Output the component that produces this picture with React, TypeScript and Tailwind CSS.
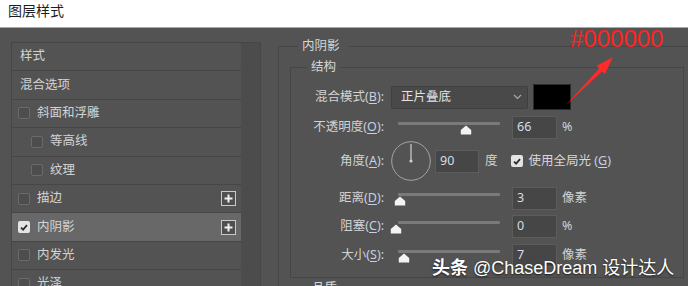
import React from 'react'

const ui = "font-['Noto_Sans','Noto_Sans_CJK_SC',sans-serif]"

function Acc({ k, colon = true }: { k: string; colon?: boolean }) {
  return (
    <span className="text-[#c3d2e2]">
      (<span className="underline decoration-1 underline-offset-2">{k}</span>){colon ? ':' : ''}
    </span>
  )
}

function Box({ checked = false, className = '' }: { checked?: boolean; className?: string }) {
  return checked ? (
    <span className={`flex h-[12px] w-[12px] shrink-0 items-center justify-center rounded-[2px] bg-[#e4e4e4] ${className}`}>
      <svg width="8" height="7" viewBox="0 0 8 7">
        <path d="M1 3.6 L3.1 5.6 L7 1.2" fill="none" stroke="#2e2e2e" strokeWidth="1.8" />
      </svg>
    </span>
  ) : (
    <span className={`h-[12px] w-[12px] shrink-0 rounded-[2px] border border-[#6a6a6a] bg-[#4d4d4d] ${className}`} />
  )
}

function Plus() {
  return (
    <span className="ml-auto mr-[5px] flex h-[15px] w-[15px] items-center justify-center border border-[#c9c9c9] bg-[#4f4f4f]">
      <svg width="9" height="9" viewBox="0 0 9 9">
        <path d="M4.5 0.5 V8.5 M0.5 4.5 H8.5" stroke="#f2f2f2" strokeWidth="2" />
      </svg>
    </span>
  )
}

type Row = { label: string; box?: 'none' | 'off' | 'on'; indent?: boolean; plus?: boolean; active?: boolean }

const rows: Row[] = [
  { label: '样式' },
  { label: '混合选项' },
  { label: '斜面和浮雕', box: 'off' },
  { label: '等高线', box: 'off', indent: true },
  { label: '纹理', box: 'off', indent: true },
  { label: '描边', box: 'off', plus: true },
  { label: '内阴影', box: 'on', plus: true, active: true },
  { label: '内发光', box: 'off' },
  { label: '光泽', box: 'off' },
]

function Thumb({ left }: { left: number }) {
  return (
    <svg className="absolute top-[5px]" style={{ left }} width="12" height="10" viewBox="0 0 12 10">
      <path d="M6 0.5 L11.2 5 L11.2 9.5 L0.8 9.5 L0.8 5 Z" fill="#f3f3f3" />
    </svg>
  )
}

function Slider({ thumb }: { thumb: number }) {
  return (
    <div className="relative ml-[14px] h-[16px] w-[102px]">
      <div className="absolute left-0 right-0 top-[2px] h-[3px] rounded-[1px] bg-[#7a7a7a]" />
      <Thumb left={thumb} />
    </div>
  )
}

function Field({ value, className = '' }: { value: string; className?: string }) {
  return (
    <div
      className={`flex h-[23px] items-center border border-[#5c5c5c] bg-[#464646] pl-[4px] text-[12.5px] text-[#d5dde6] ${className}`}
    >
      {value}
    </div>
  )
}

function Label({ text, k }: { text: string; k: string }) {
  return (
    <div className="w-[93px] shrink-0 text-right text-[12.5px] text-[#d2d2d2]">
      {text}
      <Acc k={k} />
    </div>
  )
}

function SliderRow({ text, k, thumb, value, unit, mt }: { text: string; k: string; thumb: number; value: string; unit: string; mt: string }) {
  return (
    <div className={`flex h-[23px] items-center ${mt}`}>
      <Label text={text} k={k} />
      <Slider thumb={thumb} />
      <Field value={value} className="ml-[12px] w-[45px]" />
      <span className="ml-[5px] text-[12.5px] text-[#d2d2d2]">{unit}</span>
    </div>
  )
}

export default function App() {
  return (
    <div className={`relative h-[286px] w-[688px] overflow-hidden bg-white ${ui}`}>
      <div className="h-[28px] border-b border-[#a9a9a9] pl-[8px] text-[14px] leading-[21px] text-[#1e1e1e]">图层样式</div>

      <div className="flex h-[258px] items-start bg-[#535353]">
        {/* style list */}
        <div className="ml-[11px] mt-[14px] flex w-[250px] border border-[#464646]">
          <div className="w-[229px]">
            {rows.map((r) => (
              <div
                key={r.label}
                className={`box-border flex h-[28.4px] items-center border-b border-[#464646] text-[12.5px] text-[#d4d4d4] ${
                  r.active ? 'bg-[#686868]' : ''
                } ${r.box ? (r.indent ? 'pl-[19px]' : 'pl-[6px]') : 'pl-[8px]'}`}
              >
                {r.box && <Box checked={r.box === 'on'} className="mr-[7px]" />}
                <span>{r.label}</span>
                {r.plus && <Plus />}
              </div>
            ))}
          </div>
          <div className="flex-1 bg-[#4c4c4c]" />
        </div>

        {/* inner shadow settings */}
        <fieldset className="ml-[17px] mt-[10px] flex-1 border-l border-t border-[#464646] pl-[11px]">
          <legend className="ml-[8px] pl-[4px] pr-[9px] text-[12.5px] leading-[16px] text-[#d8d8d8]">内阴影</legend>
          <fieldset className="mt-[5px] w-[394px] border border-[#464646] pb-[10px]">
            <legend className="ml-[16px] px-[4px] text-[12.5px] leading-[16px] text-[#d8d8d8]">结构</legend>

            <div className="mt-[9px] flex h-[26px] items-center">
              <Label text="混合模式" k="B" />
              <div className="ml-[7px] flex h-[23px] w-[137px] items-center rounded-[2px] border border-[#3f3f3f] bg-[#494949] pl-[9px] pr-[5px] text-[12.5px] text-[#e2e2e2]">
                正片叠底
                <svg className="ml-auto" width="9" height="6" viewBox="0 0 9 6">
                  <path d="M1 1 L4.5 4.5 L8 1" fill="none" stroke="#a9a9a9" strokeWidth="1.2" />
                </svg>
              </div>
              <div className="ml-[5px] h-[26px] w-[38px] border border-[#2c2c2c] bg-black" />
            </div>

            <SliderRow text="不透明度" k="O" thumb={62} value="66" unit="%" mt="mt-[6px]" />

            <div className="mt-[2px] flex h-[40px] items-center">
              <Label text="角度" k="A" />
              <svg className="ml-[7px]" width="40" height="40" viewBox="0 0 40 40">
                <circle cx="20" cy="20" r="19.3" fill="none" stroke="#a5a5a5" strokeWidth="1" />
                <path d="M20 3 V20" stroke="#cfcfcf" strokeWidth="1.2" />
                <circle cx="20" cy="20" r="1.6" fill="#cfcfcf" />
              </svg>
              <Field value="90" className="ml-[4px] w-[44px]" />
              <span className="ml-[6px] text-[12.5px] text-[#d2d2d2]">度</span>
              <Box checked className="ml-[13px]" />
              <span className="ml-[6px] text-[12.5px] text-[#d8d8d8]">
                使用全局光 <Acc k="G" colon={false} />
              </span>
            </div>

            <SliderRow text="距离" k="D" thumb={-4} value="3" unit="像素" mt="mt-[6px]" />
            <SliderRow text="阻塞" k="C" thumb={-8} value="0" unit="%" mt="mt-[5px]" />
            <SliderRow text="大小" k="S" thumb={0} value="7" unit="像素" mt="mt-[6px]" />
          </fieldset>
          <fieldset className="mt-[2px] w-[394px] border-t border-[#464646]">
            <legend className="ml-[18px] px-[4px] text-[12.5px] leading-[16px] text-[#d8d8d8]">品质</legend>
          </fieldset>
        </fieldset>
      </div>

      {/* annotation */}
      <div className="absolute left-[570px] top-[27px] font-['Liberation_Sans',sans-serif] text-[24px] leading-[24px] text-[#ff2323]">
        #000000
      </div>
      <svg className="absolute left-[560px] top-[50px]" width="60" height="60" viewBox="560 50 60 60">
        <polygon points="566.5,104.5 599.2,68.6 596.3,65.9 613,57 604.9,74.1 602,71.4" fill="#ff2a2a" />
      </svg>

      {/* watermark */}
      <div className="absolute left-[432px] top-[256px] whitespace-nowrap font-['Liberation_Sans','Noto_Sans_CJK_SC',sans-serif] text-[18px] leading-[24px] text-white [text-shadow:0_1px_2px_rgba(0,0,0,0.75)]">
        <span className="font-bold">头条</span> @ChaseDream 设计达人
      </div>
    </div>
  )
}
